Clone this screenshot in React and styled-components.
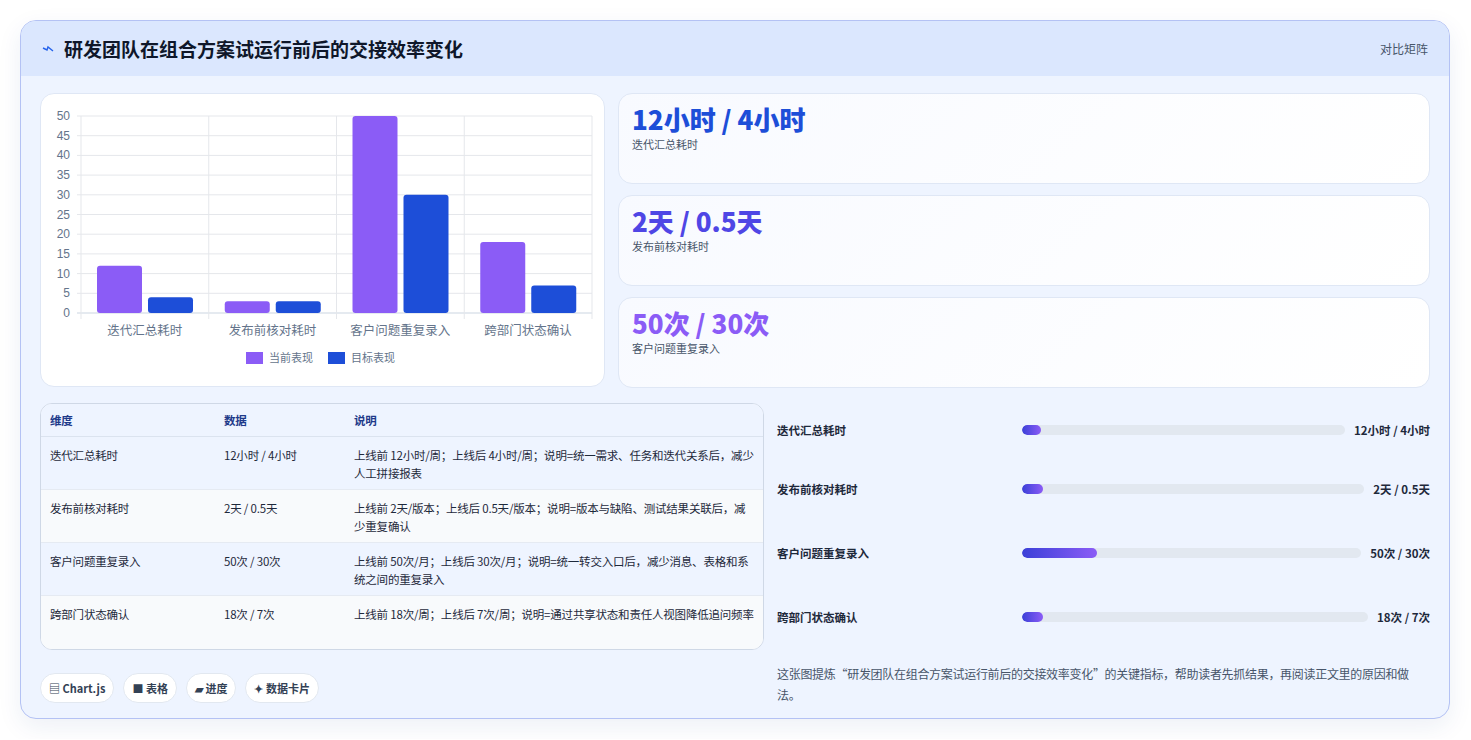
import React from 'react';
import styled, { createGlobalStyle } from 'styled-components';

const Global = createGlobalStyle`
  body { margin: 0; background: #ffffff; font-family: "Noto Sans CJK SC", "Noto Sans", sans-serif; color: #1e293b; }
`;

const Page = styled.div`
  padding: 20px 20px 20px 20px;
`;

const Panel = styled.div`
  width: 1430px;
  height: 699px;
  box-sizing: border-box;
  border: 1px solid #b4c2f4;
  border-radius: 16px;
  background: #eef4ff;
  overflow: hidden;
  box-shadow: 0 8px 24px rgba(30, 58, 138, 0.08);
  display: flex;
  flex-direction: column;
`;

const Header = styled.div`
  height: 55px;
  flex: none;
  background: #dbe7fe;
  display: flex;
  align-items: center;
  justify-content: space-between;
  padding: 0 21px;
`;

const Title = styled.h1`
  margin: 0;
  font-size: 19px;
  font-weight: 700;
  color: #0f172a;
  display: flex;
  align-items: center;
  gap: 10px;
`;

const Tag = styled.span`
  font-size: 12px;
  color: #475569;
`;

const Body = styled.div`
  padding: 17px 19px 0;
  display: flex;
  flex-direction: column;
  gap: 15px;
`;

const TopRow = styled.div`
  display: grid;
  grid-template-columns: 565px 1fr;
  gap: 13px;
`;

const ChartCard = styled.div`
  background: #fff;
  border: 1px solid #dfe7f5;
  border-radius: 14px;
  height: 294px;
  box-sizing: border-box;
`;

const Cards = styled.div`
  display: flex;
  flex-direction: column;
  gap: 11px;
`;

const StatCard = styled.div`
  height: 91px;
  box-sizing: border-box;
  border: 1px solid #dfe7f5;
  border-radius: 14px;
  background: linear-gradient(135deg, #f8faff, #ffffff);
  padding: 8px 13px;
`;

const StatValue = styled.div`
  font-size: 26px;
  font-weight: 800;
  line-height: 34px;
  color: ${p => p.color};
`;

const StatLabel = styled.div`
  font-size: 11px;
  color: #475569;
`;

const BottomRow = styled.div`
  display: grid;
  grid-template-columns: 724px 1fr;
  gap: 13px;
`;

const Left = styled.div`
  display: flex;
  flex-direction: column;
  gap: 23px;
`;

const TableBox = styled.div`
  border: 1px solid #cfd8e6;
  border-radius: 12px;
  overflow: hidden;
  background: #fff;
`;

const Table = styled.table`
  width: 100%;
  border-collapse: collapse;
  font-size: 11.5px;
  letter-spacing: -0.2px;
  th {
    text-align: left;
    background: #eef4ff;
    color: #1e3a8a;
    font-weight: 700;
    height: 32px;
    padding: 0 9px;
    border-bottom: 1px solid #dbe3ef;
  }
  td {
    vertical-align: top;
    padding: 9px 9px 0;
    height: 53px;
    box-sizing: border-box;
    line-height: 18px;
    color: #1e293b;
    border-bottom: 1px solid #e5eaf2;
  }
  tbody tr:nth-child(odd) { background: #eef4ff; }
  tbody tr:nth-child(even) { background: #f8fafc; }
  tbody tr:last-child td { border-bottom: none; }
`;

const Chips = styled.div`
  display: flex;
  gap: 9px;
`;

const Chip = styled.span`
  font-size: 11px;
  font-weight: 600;
  color: #334155;
  background: #fff;
  border: 1px solid #e2e8f0;
  border-radius: 999px;
  padding: 6px 8px;
`;

const Right = styled.div`
  display: flex;
  flex-direction: column;
`;

const ProgRow = styled.div`
  display: grid;
  grid-template-columns: 236px 1fr auto;
  align-items: center;
  gap: 9px;
  height: 64px;
  font-size: 11.5px;
  font-weight: 600;
  color: #1e293b;
  &:first-child { height: 54px; }
`;

const Track = styled.div`
  height: 10px;
  border-radius: 6px;
  background: #e2e8f0;
  overflow: hidden;
`;

const Fill = styled.div`
  height: 100%;
  border-radius: 6px;
  background: linear-gradient(90deg, #3b40d8, #8b5cf6);
`;

const Note = styled.p`
  margin: 14px 0 0;
  font-size: 12px;
  letter-spacing: -0.3px;
  line-height: 21px;
  color: #475569;
`;

const cats = ['迭代汇总耗时', '发布前核对耗时', '客户问题重复录入', '跨部门状态确认'];
const before = [12, 3, 50, 18];
const after = [4, 3, 30, 7];

const Chart = () => {
  const x0 = 40, x1 = 551, yTop = 22, yBase = 219;
  const unit = (yBase - yTop) / 50;
  const cw = (x1 - x0) / 4;
  return (
    <svg width="563" height="292" style={{ display: 'block' }}>
      {[0, 5, 10, 15, 20, 25, 30, 35, 40, 45, 50].map(v => (
        <g key={v}>
          <line x1={x0 - 4} x2={x1} y1={yBase - v * unit} y2={yBase - v * unit} stroke={v === 0 ? '#cbd5e1' : '#e5e7eb'} />
          <text x={x0 - 11} y={yBase - v * unit + 4} textAnchor="end" fontSize="12" fill="#64748b" fontFamily="Liberation Sans, sans-serif">{v}</text>
        </g>
      ))}
      {[0, 1, 2, 3, 4].map(i => (
        <line key={i} x1={x0 + i * cw} x2={x0 + i * cw} y1={yTop} y2={yBase + 6} stroke="#e5e7eb" />
      ))}
      {cats.map((c, i) => {
        const cx = x0 + i * cw;
        return (
          <g key={c}>
            <rect x={cx + 16} y={yBase - before[i] * unit} width="45" height={before[i] * unit} rx="3" fill="#8b5cf6" />
            <rect x={cx + 67} y={yBase - after[i] * unit} width="45" height={after[i] * unit} rx="3" fill="#1d4ed8" />
            <text x={cx + cw / 2} y={yBase + 22} textAnchor="middle" fontSize="12.5" fill="#64748b">{c}</text>
          </g>
        );
      })}
      <rect x="205" y="258" width="17" height="12" fill="#8b5cf6" />
      <text x="228" y="268" fontSize="11" fill="#64748b">当前表现</text>
      <rect x="287" y="258" width="17" height="12" fill="#1d4ed8" />
      <text x="310" y="268" fontSize="11" fill="#64748b">目标表现</text>
    </svg>
  );
};

const rows = [
  ['迭代汇总耗时', '12小时 / 4小时', '上线前 12小时/周；上线后 4小时/周；说明=统一需求、任务和迭代关系后，减少人工拼接报表', 6],
  ['发布前核对耗时', '2天 / 0.5天', '上线前 2天/版本；上线后 0.5天/版本；说明=版本与缺陷、测试结果关联后，减少重复确认', 6],
  ['客户问题重复录入', '50次 / 30次', '上线前 50次/月；上线后 30次/月；说明=统一转交入口后，减少消息、表格和系统之间的重复录入', 22],
  ['跨部门状态确认', '18次 / 7次', '上线前 18次/周；上线后 7次/周；说明=通过共享状态和责任人视图降低追问频率', 6],
];

export default function App() {
  return (
    <Page>
      <Global />
      <Panel>
        <Header>
          <Title>
            <svg width="12" height="8" viewBox="0 0 12 8"><path d="M1 3 L5 5 L6 2 L11 6" stroke="#2563eb" strokeWidth="1.4" fill="none" /></svg>
            研发团队在组合方案试运行前后的交接效率变化
          </Title>
          <Tag>对比矩阵</Tag>
        </Header>
        <Body>
          <TopRow>
            <ChartCard><Chart /></ChartCard>
            <Cards>
              <StatCard><StatValue color="#1d4ed8">12小时 / 4小时</StatValue><StatLabel>迭代汇总耗时</StatLabel></StatCard>
              <StatCard><StatValue color="#4f46e5">2天 / 0.5天</StatValue><StatLabel>发布前核对耗时</StatLabel></StatCard>
              <StatCard><StatValue color="#8b5cf6">50次 / 30次</StatValue><StatLabel>客户问题重复录入</StatLabel></StatCard>
            </Cards>
          </TopRow>
          <BottomRow>
            <Left>
              <TableBox>
                <Table>
                  <thead>
                    <tr><th style={{ width: 156 }}>维度</th><th style={{ width: 112 }}>数据</th><th>说明</th></tr>
                  </thead>
                  <tbody>
                    {rows.map(r => (
                      <tr key={r[0]}><td>{r[0]}</td><td>{r[1]}</td><td>{r[2]}</td></tr>
                    ))}
                  </tbody>
                </Table>
              </TableBox>
              <Chips>
                <Chip>▤ Chart.js</Chip>
                <Chip>■ 表格</Chip>
                <Chip>▰ 进度</Chip>
                <Chip>✦ 数据卡片</Chip>
              </Chips>
            </Left>
            <Right>
              {rows.map(r => (
                <ProgRow key={r[0]}>
                  <span>{r[0]}</span>
                  <Track><Fill style={{ width: `${r[3]}%` }} /></Track>
                  <span>{r[1]}</span>
                </ProgRow>
              ))}
              <Note>这张图提炼“研发团队在组合方案试运行前后的交接效率变化”的关键指标，帮助读者先抓结果，再阅读正文里的原因和做法。</Note>
            </Right>
          </BottomRow>
        </Body>
      </Panel>
    </Page>
  );
}
